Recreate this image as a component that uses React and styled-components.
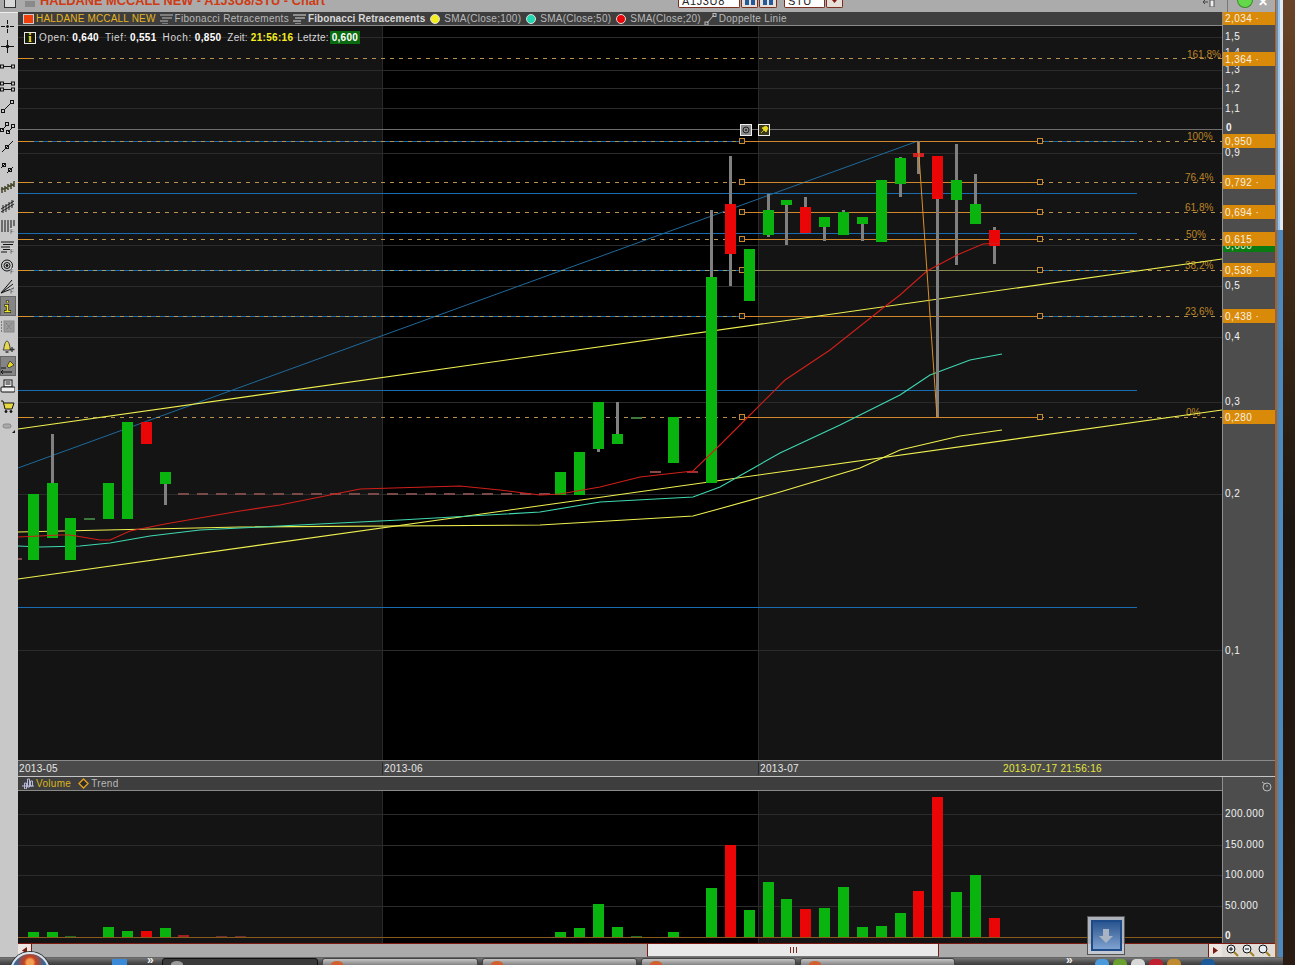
import React from 'react';
import styled, { createGlobalStyle } from 'styled-components';

const GlobalStyle = createGlobalStyle`
  html, body {
    margin: 0;
    padding: 0;
    background: #2a1c12;
  }
`;

const UI_FONT = '"Liberation Sans", Arial, sans-serif';
const AXIS_TOP = 12;
const VOL_AXIS_TOP = 777;

const Screen = styled.div`
  position: relative;
  width: 1295px;
  height: 965px;
  overflow: hidden;
  display: grid;
  grid-template-columns: 1283px 12px;
  grid-template-rows: 957px 8px;
  font-family: ${UI_FONT};
  background: #2a1c12;
`;

const AppWindow = styled.div`
  grid-column: 1;
  grid-row: 1;
  display: flex;
  flex-direction: column;
  min-width: 0;
  box-sizing: border-box;
  padding-right: 8px;
  background:
    linear-gradient(90deg, #aaa 0 1275px, #a8602a 1275px 1276px, #7d8c9c 1276px 1278px, #9cc4e8 1278px 1280px, #dfeaf4 1280px 1283px) top / 100% 230px no-repeat,
    linear-gradient(90deg, #aaa 0 1275px, #a8602a 1275px 1277px, #5b7f9f 1277px 1279px, #4a8ac0 1279px 1283px);
`;

const Wallpaper = styled.div`
  grid-column: 2;
  grid-row: 1 / 3;
  background: linear-gradient(180deg, #6a4428 0%, #4a3018 20%, #1c1510 55%, #2a1c12 100%);
`;

/* title strip */
const TitleBar = styled.header`
  height: 12px;
  flex: none;
  display: flex;
  align-items: flex-end;
  background: #ababab;
  overflow: hidden;
`;

const WindowBox = styled.div`
  width: 10px;
  height: 7px;
  margin: 0 0 4px 4px;
  border: 1px solid #333;
  border-top: 0;
  background: #d8d8d8;
`;

const PinMark = styled.div`
  width: 10px;
  height: 6px;
  margin: 0 0 5px 9px;
  background: #8a8a8a;
`;

const TitleText = styled.span`
  margin-left: 5px;
  margin-bottom: 4px;
  font-size: 12.8px;
  line-height: 14px;
  font-weight: bold;
  color: #cf3a12;
  white-space: nowrap;
`;

const SymbolInput = styled.div`
  width: ${p => p.$w}px;
  height: 8px;
  margin-left: ${p => p.$ml}px;
  margin-bottom: 4px;
  padding-left: 3px;
  box-sizing: border-box;
  background: #fff;
  border: 1px solid #7a3020;
  border-top: 0;
  border-radius: 0 0 2px 2px;
  font-size: 11px;
  line-height: 2px;
  letter-spacing: 0.6px;
  color: #222;
  overflow: hidden;
`;

const SymbolButton = styled.div`
  width: ${p => p.$w || 17}px;
  height: 8px;
  margin-left: 1px;
  margin-bottom: 4px;
  display: flex;
  justify-content: center;
  background: #e8e0d8;
  border: 1px solid #7a3020;
  border-top: 0;
  border-radius: 0 0 2px 2px;
  box-sizing: border-box;
`;

const TitleIcons = styled.div`
  margin-left: auto;
  display: flex;
  align-items: flex-end;
  gap: 5px;
  padding-right: 7px;
`;

const TitleGlyph = styled.svg`
  margin-bottom: 5px;
`;

const TitleSeparator = styled.span`
  width: 1px;
  height: 12px;
  margin-left: 7px;
  background: #777;
`;

const StatusLamp = styled.div`
  width: 16px;
  height: 8px;
  margin-left: 4px;
  margin-bottom: 4px;
  border-radius: 0 0 8px 8px;
  background: #63d94a;
  border: 1px solid #3a8a2a;
  border-top: 0;
  box-sizing: border-box;
`;

const CloseMark = styled.span`
  width: 10px;
  height: 8px;
  margin-bottom: 4px;
  font-size: 12px;
  line-height: 4px;
  overflow: hidden;
  font-weight: bold;
  color: #fff;
`;

const MainRow = styled.div`
  flex: 1;
  display: flex;
  min-height: 0;
`;

/* left drawing tools */
const ToolBar = styled.nav`
  width: 18px;
  flex: none;
  display: flex;
  flex-direction: column;
  padding-top: 3px;
  box-sizing: border-box;
  background: #c8c8c8;
  border-top: 1px solid #eee;
`;

const ToolButton = styled.div`
  width: 16px;
  height: 20px;
  flex: none;
  display: flex;
  align-items: center;
  box-sizing: border-box;
  background: ${p => (p.$active ? '#858585' : 'transparent')};
  box-shadow: ${p => (p.$active ? 'inset 0 0 0 1px #666' : 'none')};
`;

const ChartGrid = styled.div`
  width: 1257px;
  display: grid;
  grid-template-columns: 1204px 53px;
  grid-template-rows: 14px 734px 16px 1px 14px 152px 14px;
`;

const LegendBar = styled.div`
  display: flex;
  align-items: center;
  gap: 2px;
  padding-left: ${p => p.$pl || 5}px;
  box-sizing: border-box;
  background: #3e3e3e;
  border-bottom: 1px solid #8a8a8a;
  font-size: 10px;
  letter-spacing: 0.3px;
  color: #b9b9b9;
  white-space: nowrap;
  overflow: hidden;
`;

const SymbolSwatch = styled.span`
  width: 11px;
  height: 10px;
  background: #f0400c;
  border: 1px solid #ccc;
  box-sizing: border-box;
`;

const LegendName = styled.span`
  color: ${p => p.$color || '#b9b9b9'};
  font-weight: ${p => (p.$bold ? 'bold' : 'normal')};
  letter-spacing: ${p => p.$ls ?? 0.3}px;
`;

const LegendIcon = styled.span`
  display: flex;
  margin-left: ${p => p.$ml ?? 2}px;
`;

const LegendDot = styled.span`
  width: 10px;
  height: 10px;
  border-radius: 50%;
  margin: 0 2px 0 3px;
  background: ${p => p.$color};
  border: 1px solid #ddd;
  box-sizing: border-box;
`;

const PricePanel = styled.div`
  position: relative;
  overflow: hidden;
`;

const PanelSvg = styled.svg`
  display: block;
`;

const QuoteInfo = styled.div`
  position: absolute;
  left: 6px;
  top: 5px;
  display: flex;
  align-items: center;
  gap: 3px;
  font-size: 10px;
  color: #d8d8d8;
  white-space: nowrap;
`;

const InfoBadge = styled.span`
  width: 12px;
  height: 12px;
  box-sizing: border-box;
  display: flex;
  align-items: center;
  justify-content: center;
  background: #1a1a08;
  border: 1px solid #e8e8e8;
  color: #f0e830;
  font-family: "Liberation Serif", serif;
  font-weight: bold;
  font-size: 12px;
  line-height: 10px;
`;

const QuoteLabel = styled.span`
  letter-spacing: ${p => p.$ls ?? 0.62}px;
`;

const QuoteValue = styled.b`
  color: ${p => p.$color || '#fff'};
  margin-left: ${p => p.$ml || 0}px;
  margin-right: ${p => p.$mr ?? 3}px;
  background: ${p => p.$bg || 'transparent'};
  padding: ${p => (p.$bg ? '1px 2px' : '0')};
  letter-spacing: 0.3px;
`;

const FibLabel = styled.text`
  font-family: ${UI_FONT};
  font-size: 10px;
  fill: #bd8426;
`;

/* value axes */
const AxisColumn = styled.div`
  position: relative;
  grid-column: 2;
  grid-row: ${p => p.$row};
  background: #4d4d4d;
  border-left: 1px solid #8f8f8f;
  overflow: hidden;
  box-sizing: border-box;
`;

const AxisTick = styled.span`
  position: absolute;
  left: ${p => p.$left ?? 2}px;
  top: ${p => p.$top}px;
  font-size: 10px;
  line-height: 12px;
  letter-spacing: 0.45px;
  color: #f2f2f2;
  font-weight: ${p => (p.$bold ? 'bold' : 'normal')};
`;

const AxisMarker = styled.span`
  position: absolute;
  left: 0;
  right: 0;
  top: ${p => p.$top}px;
  height: 14px;
  box-sizing: border-box;
  padding: 1px 0 0 2px;
  background: ${p => p.$bg || '#d98a08'};
  font-size: 10px;
  line-height: 14px;
  letter-spacing: 0.45px;
  color: #f6f0e0;
  overflow: hidden;
  white-space: pre;
`;

const LastMarker = styled(AxisMarker)`
  height: 6px;
  padding-top: 0;
  line-height: 0;
  background: #0a7a12;
`;

const CornerIcon = styled.span`
  position: absolute;
  right: 3px;
  top: 2px;
`;

/* time scale */
const TimeAxis = styled.div`
  grid-column: 1 / 3;
  display: grid;
  grid-template-columns: 364px 376px 244px 220px;
  align-items: center;
  background: #4a4a4a;
  border-top: 1px solid #8a8a8a;
  box-sizing: border-box;
  font-size: 10px;
  letter-spacing: 0.32px;
  color: #e8e8e8;
`;

const TimeLabel = styled.span`
  padding-left: 1px;
  border-left: ${p => (p.$first ? 0 : '1px solid #2a2a2a')};
  line-height: 13px;
  color: ${p => p.$color || '#e8e8e8'};
`;

const Divider = styled.div`
  grid-column: 1 / 3;
  background: #c4c4c4;
`;

const VolumePanel = styled.div`
  position: relative;
`;

/* scrollbar row */
const ScrollTrack = styled.div`
  display: flex;
  position: relative;
  align-items: stretch;
  background: #ababab;
  border-top: 1px solid #7a1a10;
  box-sizing: border-box;
`;

const ScrollArrow = styled.div`
  width: 14px;
  flex: none;
  display: flex;
  align-items: center;
  justify-content: center;
  background: #ece6e2;
  border-right: ${p => (p.$left ? '1px solid #7a1a10' : 0)};
  border-left: ${p => (p.$left ? 0 : '1px solid #7a1a10')};
  box-sizing: border-box;
  margin-left: ${p => (p.$left ? 0 : 'auto')};
`;

const ScrollThumb = styled.div`
  width: 292px;
  margin-left: 615px;
  display: flex;
  align-items: center;
  justify-content: center;
  gap: 2px;
  background: #e9e9e9;
  border-left: 1px solid #7a1a10;
  border-right: 1px solid #7a1a10;
  border-bottom: 1px solid #777;
  box-sizing: border-box;
`;

const GripLine = styled.span`
  width: 1px;
  height: 6px;
  background: #7a2a20;
`;

const ZoomGroup = styled.div`
  display: flex;
  align-items: center;
  justify-content: space-around;
  padding: 0 2px;
  background: #e2dcd6;
  border-top: 1px solid #7a1a10;
  box-sizing: border-box;
`;

const DownloadFloat = styled.div`
  position: absolute;
  left: 1087px;
  top: 916px;
  width: 38px;
  height: 39px;
  box-sizing: border-box;
  display: flex;
  align-items: center;
  justify-content: center;
  background: rgba(200, 205, 215, 0.85);
  border: 1px solid #555;
`;

const DownloadInner = styled.div`
  width: 31px;
  height: 31px;
  box-sizing: border-box;
  display: flex;
  align-items: center;
  justify-content: center;
  background: linear-gradient(180deg, #2a5590 0%, #5a7fb0 55%, #7ea2d2 100%);
  border: 2px solid #1d4a88;
`;

/* taskbar */
const Taskbar = styled.footer`
  grid-column: 1;
  grid-row: 2;
  position: relative;
  display: flex;
  align-items: flex-start;
  padding-left: 112px;
  gap: 4px;
  background: linear-gradient(180deg, #767676 0%, #4e4e4e 60%, #3c3c3c 100%);
  border-top: 1px solid #666;
  box-sizing: border-box;
  overflow: hidden;
`;

const StartOrb = styled.div`
  position: absolute;
  left: 10px;
  top: 952px;
  width: 40px;
  height: 40px;
  border-radius: 50%;
  box-sizing: border-box;
  border: 2px solid #d8e4ee;
  background: radial-gradient(circle at 50% 24%, #f0a050 0 10%, #c8401e 18%, #2a6aa0 45%);
  box-shadow: 0 0 0 1px #333;
`;

const QuickIcon = styled.span`
  width: 15px;
  height: 8px;
  margin-top: 1px;
  border-radius: 1px 1px 0 0;
  background: #3a8ad8;
`;

const Chevron = styled.span`
  width: 11px;
  margin-left: ${p => p.$ml}px;
  font-size: 12px;
  line-height: 4px;
  color: #eee;
  height: 8px;
  overflow: hidden;
  font-weight: bold;
`;

const TaskButton = styled.div`
  width: ${p => p.$w}px;
  height: 9px;
  padding: 2px 0 0 8px;
  border-radius: 3px 3px 0 0;
  box-sizing: border-box;
  border: 1px solid ${p => (p.$active ? '#111' : '#444')};
  background: ${p => (p.$active ? '#3a3a3a' : 'linear-gradient(180deg, #c4c4c4, #7a7a7a)')};
`;

const TaskGlyph = styled.span`
  display: block;
  width: 12px;
  height: 6px;
  border-radius: 50% 50% 0 0;
  background: ${p => p.$color};
`;

const TrayGroup = styled.div`
  margin-left: auto;
  display: flex;
  gap: 4px;
  padding: 1px 68px 0 0;
`;

const TrayIcon = styled.span`
  width: 14px;
  height: 8px;
  margin-left: ${p => p.$ml || 0}px;
  border-radius: 5px 5px 0 0;
  background: ${p => p.$color};
`;

const GREEN = '#0ab40e';
const RED = '#ea0606';
const WICK = '#808080';

// x left edge, body top/bottom, wick top/bottom, colour
const candles = [
  { x: 28, t: 494, b: 560, c: GREEN },
  { x: 47, t: 483, b: 538, wt: 434, wb: 483, c: GREEN },
  { x: 65, t: 518, b: 560, c: GREEN },
  { x: 84, t: 518, b: 520, c: '#3c7a3c' },
  { x: 103, t: 483, b: 519, c: GREEN },
  { x: 122, t: 422, b: 519, c: GREEN },
  { x: 141, t: 422, b: 444, c: RED },
  { x: 160, t: 472, b: 484, wt: 484, wb: 505, c: GREEN },
  { x: 555, t: 472, b: 495, c: GREEN },
  { x: 574, t: 452, b: 495, c: GREEN },
  { x: 593, t: 402, b: 449, wt: 449, wb: 452, c: GREEN },
  { x: 612, t: 434, b: 444, wt: 402, wb: 434, c: GREEN },
  { x: 631, t: 417, b: 419, c: '#3c7a3c' },
  { x: 650, t: 471, b: 473, c: '#8a4a44' },
  { x: 668, t: 417, b: 463, c: GREEN },
  { x: 687, t: 471, b: 473, c: '#a03030' },
  { x: 706, t: 277, b: 483, wt: 210, wb: 277, c: GREEN },
  { x: 725, t: 204, b: 254, wt: 156, wb: 286, c: RED },
  { x: 744, t: 249, b: 301, c: GREEN },
  { x: 763, t: 210, b: 235, wt: 194, wb: 237, c: GREEN },
  { x: 781, t: 200, b: 205, wt: 205, wb: 245, c: GREEN },
  { x: 800, t: 207, b: 233, wt: 197, wb: 233, c: RED },
  { x: 819, t: 217, b: 227, wt: 227, wb: 241, c: GREEN },
  { x: 838, t: 212, b: 235, wt: 210, wb: 212, c: GREEN },
  { x: 857, t: 217, b: 224, wt: 224, wb: 241, c: GREEN },
  { x: 876, t: 180, b: 242, c: GREEN },
  { x: 895, t: 158, b: 184, wt: 157, wb: 197, c: GREEN },
  { x: 913, t: 153, b: 157, wt: 141, wb: 174, c: '#d02020' },
  { x: 932, t: 156, b: 199, wt: 199, wb: 417, c: RED },
  { x: 951, t: 180, b: 200, wt: 144, wb: 265, c: GREEN },
  { x: 970, t: 204, b: 224, wt: 174, wb: 204, c: GREEN },
  { x: 989, t: 230, b: 246, wt: 227, wb: 264, c: RED },
];

const volumes = [
  [28, 932, GREEN], [47, 932, GREEN], [65, 936, '#1d6a20'], [103, 927, GREEN], [122, 931, GREEN],
  [141, 931, RED], [160, 928, GREEN], [178, 935, '#a02020'], [216, 936, '#6a3030'], [235, 936, '#6a3030'],
  [555, 932, GREEN], [574, 928, GREEN], [593, 904, GREEN], [612, 927, GREEN], [631, 936, '#1d6a20'],
  [668, 932, GREEN], [706, 888, GREEN], [725, 845, RED], [744, 910, GREEN], [763, 882, GREEN],
  [781, 899, GREEN], [800, 909, RED], [819, 908, GREEN], [838, 887, GREEN], [857, 927, GREEN],
  [876, 926, GREEN], [895, 913, GREEN], [913, 891, RED], [932, 797, RED], [951, 892, GREEN],
  [970, 875, GREEN], [989, 918, RED],
];

const fibLevels = [
  { y: 141, label: '100%', ly: 140, lx: 1187 },
  { y: 182, label: '76,4%', ly: 181, lx: 1185 },
  { y: 212, label: '61,8%', ly: 211, lx: 1185 },
  { y: 239, label: '50%', ly: 238, lx: 1186 },
  { y: 270, label: '38,2%', ly: 269, lx: 1185, solid: '#8c8c50' },
  { y: 316, label: '23,6%', ly: 315, lx: 1185 },
  { y: 417, label: '0%', ly: 416, lx: 1186 },
];

const channelLines = [141, 193, 233, 270, 316, 390, 607];
const priceGrid = [37, 70, 88, 108, 153, 245, 286, 337, 402, 494, 650];
const volumeGrid = [814, 845, 875, 906];

const sma100 = '18,532 240,527 540,525 693,516 715,510 780,492 860,468 900,450 960,436 1002,430';
const sma50 = '18,546 40,547 80,546 110,543 150,536 200,530 240,528 400,520 540,512 600,502 693,497 720,487 780,453 840,425 900,395 930,375 970,360 1002,354';
const sma20 = '18,537 60,535 70,535 100,540 110,540 130,531 165,524 240,511 280,505 360,489 460,486 500,490 540,495 560,494 600,487 640,477 693,471 720,445 750,415 785,380 830,350 883,308 900,295 927,271 957,255 983,244 1000,243';

const PriceChart = () => (
  <PanelSvg width="1204" height="734" viewBox="18 26 1204 734">
    <rect x="18" y="26" width="364" height="734" fill="#141414" />
    <rect x="382" y="26" width="376" height="734" fill="#000" />
    <rect x="758" y="26" width="464" height="734" fill="#141414" />
    <path d="M382.5 26V760M758.5 26V760" stroke="#2a2a2a" />
    {priceGrid.map(y => (
      <line key={y} x1="18" x2="1222" y1={y + 0.5} y2={y + 0.5} stroke="#2b2b2b" />
    ))}
    {channelLines.map(y => (
      <line key={y} x1="18" x2="1137" y1={y + 0.5} y2={y + 0.5} stroke="#1a6cb0" />
    ))}
    <line x1="18" x2="1222" y1="129.5" y2="129.5" stroke="#6e6e6e" />
    <line x1="18" y1="468" x2="918" y2="141" stroke="#1e6a9c" />

    {/* fibonacci retracement */}
    <line x1="18" x2="30" y1="58.5" y2="58.5" stroke="#d98f2a" />
    <line x1="30" x2="1222" y1="58.5" y2="58.5" stroke="#b8934f" strokeDasharray="4 5" />
    <FibLabel x="1187" y="58">161,8%</FibLabel>
    {fibLevels.map(f => (
      <g key={f.y}>
        <line x1="18" x2="30" y1={f.y + 0.5} y2={f.y + 0.5} stroke="#d98f2a" />
        <line x1="30" x2="742" y1={f.y + 0.5} y2={f.y + 0.5} stroke={f.solid ? '#a0a070' : '#b8934f'} strokeDasharray="4 5" />
        <line x1="742" x2="1040" y1={f.y + 0.5} y2={f.y + 0.5} stroke={f.solid || '#d0862a'} />
        <line x1="1040" x2="1222" y1={f.y + 0.5} y2={f.y + 0.5} stroke="#b8934f" strokeDasharray="4 5" />
        <rect x="739.5" y={f.y - 2.5} width="5" height="5" fill="#111" stroke="#c88a30" />
        <rect x="1037.5" y={f.y - 2.5} width="5" height="5" fill="#111" stroke="#c88a30" />
        <FibLabel x={f.lx} y={f.ly}>{f.label}</FibLabel>
      </g>
    ))}

    <line x1="18" y1="429" x2="1222" y2="259" stroke="#f0f050" strokeWidth="1.1" />
    <line x1="18" y1="579" x2="1222" y2="410" stroke="#f0f050" strokeWidth="1.1" />
    <polyline points={sma100} fill="none" stroke="#f0f050" strokeWidth="1.1" />
    <polyline points={sma50} fill="none" stroke="#3fd8b0" strokeWidth="1.1" />
    <line x1="178" x2="555" y1="494" y2="494" stroke="#7a4a48" strokeWidth="2" strokeDasharray="11 8" />
    <line x1="18" x2="22" y1="559" y2="559" stroke="#7a4a48" strokeWidth="2" />

    {candles.map(c => (
      <g key={c.x}>
        {c.wt !== undefined && <rect x={c.x + 4} y={c.wt} width="3" height={c.wb - c.wt} fill={WICK} />}
        <rect x={c.x} y={c.t} width="11" height={c.b - c.t} fill={c.c} />
      </g>
    ))}

    <polyline points={sma20} fill="none" stroke="#d01f1a" strokeWidth="1.1" />
    <line x1="918" y1="141" x2="937" y2="417" stroke="#d98f2a" />

    {/* handles of the selected trend line */}
    <rect x="740.5" y="124.5" width="11" height="11" fill="#8a8a8a" stroke="#eee" />
    <circle cx="746" cy="130" r="3" fill="none" stroke="#222" />
    <circle cx="746" cy="130" r="1" fill="#222" />
    <rect x="758.5" y="124.5" width="11" height="11" fill="#3a3a1a" stroke="#eee" />
    <path d="M761 133l3-3M762 128l4 4 2-4-2-2z" fill="#e8d820" stroke="#e8d820" strokeWidth="0.8" />
  </PanelSvg>
);

const VolumeChart = () => (
  <PanelSvg width="1204" height="152" viewBox="18 791 1204 152">
    <rect x="18" y="791" width="364" height="152" fill="#141414" />
    <rect x="382" y="791" width="376" height="152" fill="#000" />
    <rect x="758" y="791" width="464" height="152" fill="#141414" />
    <path d="M382.5 791V943M758.5 791V943" stroke="#2a2a2a" />
    {volumeGrid.map(y => (
      <line key={y} x1="18" x2="1222" y1={y + 0.5} y2={y + 0.5} stroke="#2b2b2b" />
    ))}
    {volumes.map(([x, top, color]) => (
      <rect key={x} x={x} y={top} width="11" height={937 - top} fill={color} />
    ))}
    <line x1="18" x2="1222" y1="937.5" y2="937.5" stroke="#8a5a1a" />
  </PanelSvg>
);

const Ico = ({ children, w = 15, h = 15 }) => (
  <svg width={w} height={h} viewBox={`0 0 ${w} ${h}`} fill="none" stroke="#111" strokeWidth="1">
    {children}
  </svg>
);

const Dot = ({ x, y }) => <rect x={x - 1.5} y={y - 1.5} width="3" height="3" fill="none" stroke="#111" />;
const FMark = () => <text x="10" y="14.5" fontSize="7" fontWeight="bold" fontFamily={UI_FONT} fill="#111" stroke="#fff" strokeWidth="0.3">F</text>;

const tools = [
  <Ico key="a"><path d="M7.5 1v4M7.5 10v4M1 7.5h4M10 7.5h4" /><circle cx="7.5" cy="7.5" r="1" fill="#111" /></Ico>,
  <Ico key="b"><path d="M7.5 1v13M1 7.5h13" /><circle cx="7.5" cy="7.5" r="1.3" fill="#111" /></Ico>,
  <Ico key="c"><path d="M3 7.5h9" /><Dot x={2} y={7.5} /><Dot x={13} y={7.5} /></Ico>,
  <Ico key="d"><path d="M3 4.5h9M3 10.5h9" /><Dot x={2} y={4.5} /><Dot x={13} y={4.5} /><Dot x={2} y={10.5} /><Dot x={13} y={10.5} /></Ico>,
  <Ico key="e"><path d="M4 11l7-7" /><Dot x={3} y={12} /><Dot x={12} y={3} /></Ico>,
  <Ico key="f"><path d="M2 11l5-5M8 13l5-5" /><Dot x={2} y={11} /><Dot x={7} y={5} /><Dot x={8} y={13} /><Dot x={13} y={7} /></Ico>,
  <Ico key="g"><path d="M2 13L13 2" /><Dot x={7} y={8} /></Ico>,
  <Ico key="h"><path d="M1 9l5-5M7 14l6-6" /><Dot x={4} y={6} /><Dot x={10} y={11} /></Ico>,
  <Ico key="i"><path d="M2 14V8M5 13V7M8 11V5M11 10V4M14 8V2M1 11l13-6" stroke="#4a4a30" strokeWidth="1.6" /></Ico>,
  <Ico key="j"><path d="M1 13L14 5M1 10L14 2M3 14V6M6 13V5M9 11V3M12 9V1" stroke="#222" /></Ico>,
  <Ico key="k"><path d="M2 1v12M5 1v12M8 1v12M11 1v8M14 1v6" /><FMark /></Ico>,
  <Ico key="l"><path d="M1 3h13M3 5.5h10M1 8h9M3 10.5h7M1 13h6" /><FMark /></Ico>,
  <Ico key="m"><circle cx="7" cy="6.5" r="5.5" /><circle cx="7" cy="6.5" r="3" /><circle cx="7" cy="6.5" r="1" fill="#111" /><FMark /></Ico>,
  <Ico key="n"><path d="M1 14L12 1M1 14L13 5M1 14L14 9" /><FMark /></Ico>,
  <Ico key="o"><path d="M7.5 1.5v2M4.500 6.500h3v5M4 12.500h7" stroke="#222" strokeWidth="3.200" /><path d="M7.5 2v1.500M5 6.500h2.500v5.500M4.500 12.500h6" stroke="#f0e820" strokeWidth="1.600" /></Ico>,
  <Ico key="p"><rect x="4" y="2" width="10" height="11" fill="#9a9a9a" stroke="#888" /><path d="M1.5 2v11M6 4l6 7M12 4l-6 7" stroke="#7a7a7a" strokeDasharray="2 1" /></Ico>,
  <Ico key="q"><path d="M3 11c1-1 1-3 1.5-5S6 2 7 2s2 2 2.5 4 .5 4 1.500 5z" fill="#e8d850" stroke="#444" /><path d="M5.500 13h3M12 8v5M9.500 10.500h5" stroke="#333" strokeWidth="1.300" /></Ico>,
  <Ico key="r"><path d="M1 13h11M1 13l2-2M1 13l2 2" stroke="#111" /><path d="M1 9h5" stroke="#111" /><path d="M7 7l3-5 4 4-5 3z" fill="#e8d820" stroke="#444" /></Ico>,
  <Ico key="s"><rect x="4" y="1" width="8" height="7" fill="#f4f4f4" /><rect x="1" y="8" width="14" height="5" rx="1" fill="#eee" /><path d="M5.500 3h5M5.500 5h5" /></Ico>,
  <Ico key="t"><path d="M1 2h2l2 8h7l2-6H4" fill="#e8d840" stroke="#111" /><circle cx="6" cy="12.5" r="1" fill="#111" /><circle cx="11" cy="12.5" r="1" fill="#111" /></Ico>,
  <Ico key="u"><rect x="3" y="5" width="8" height="4" rx="2" fill="#aaa" stroke="#888" /><path d="M15 11v3h-3z" fill="#111" stroke="none" /></Ico>,
];

const Magnifier = ({ sign }) => (
  <svg width="13" height="13" viewBox="0 0 13 13" fill="none" stroke="#111">
    <circle cx="5" cy="5" r="4" fill="#e8eef4" />
    {sign && <path d="M3 5h4" />}
    {sign === '+' && <path d="M5 3v4" />}
    <path d="M8 8l4 4" stroke="#a08020" strokeWidth="2" />
  </svg>
);

const priceTicks = [
  ['1,5', 31], ['1,4', 47], ['1,3', 64], ['1,2', 83], ['1,1', 103], ['0,9', 147], ['0,5', 280], ['0,4', 331], ['0,3', 396], ['0,2', 488], ['0,1', 645],
];

const priceMarkers = [
  ['2,034 ·', 11], ['1,364 ·', 52], ['0,950', 134], ['0,792 ·', 175], ['0,694 ·', 205], ['0,536 ·', 263], ['0,438 ·', 309], ['0,280', 410],
];

const volumeTicks = [
  ['200.000', 808], ['150.000', 839], ['100.000', 869], ['50.000', 900],
];

const App = () => (
  <>
    <GlobalStyle />
    <Screen>
      <AppWindow>
        <TitleBar>
          <WindowBox />
          <PinMark />
          <TitleText>HALDANE MCCALL NEW - A1J3U8/STU - Chart</TitleText>
          <SymbolInput $w={62} $ml={353}>A1J3U8</SymbolInput>
          <SymbolButton><svg width="12" height="6" viewBox="0 0 12 6"><path d="M1 0h4v5H1zM7 0h4v5H7z" fill="#245a9a" /></svg></SymbolButton>
          <SymbolButton $w={18}><svg width="12" height="6" viewBox="0 0 12 6"><path d="M1 0h4v5H1zM7 0h4v5H7z" fill="#245a9a" /></svg></SymbolButton>
          <SymbolInput $w={41} $ml={7}>STU</SymbolInput>
          <SymbolButton><svg width="5" height="3" viewBox="0 0 5 3"><path d="M0 0h5L2.500 3z" fill="#7a1a10" /></svg></SymbolButton>
          <TitleIcons>
            <TitleGlyph width="12" height="7" viewBox="0 0 12 7">
              <path d="M7 0h4v7H7z" fill="#eee" stroke="#555" />
              <path d="M0 2h5M2 0L0 2l2 2" fill="none" stroke="#444" />
            </TitleGlyph>
            <TitleSeparator />
            <StatusLamp />
            <CloseMark>✕</CloseMark>
          </TitleIcons>
        </TitleBar>
        <MainRow>
          <ToolBar>
            {tools.map((icon, i) => (
              <ToolButton key={i} $active={i === 14 || i === 17}>{icon}</ToolButton>
            ))}
          </ToolBar>
          <ChartGrid>
            <LegendBar>
              <SymbolSwatch />
              <LegendName $color="#e6b422" $ls={0.18}>HALDANE MCCALL NEW</LegendName>
              <LegendIcon><Ico w={13} h={11}><path d="M0 2h13M2 5h10M0 8h8M2 11h6" stroke="#bbb" /></Ico></LegendIcon>
              <LegendName>Fibonacci Retracements</LegendName>
              <LegendIcon><Ico w={13} h={11}><path d="M0 2h13M2 5h10M0 8h8M2 11h6" stroke="#ddd" /></Ico></LegendIcon>
              <LegendName $bold $color="#d8d8d8" $ls={0.08}>Fibonacci Retracements</LegendName>
              <LegendDot $color="#f4ee20" />
              <LegendName $ls={0.25}>SMA(Close;100)</LegendName>
              <LegendDot $color="#22d8b0" />
              <LegendName $ls={0.25}>SMA(Close;50)</LegendName>
              <LegendDot $color="#ea0606" />
              <LegendName $ls={0.2}>SMA(Close;20)</LegendName>
              <LegendIcon $ml={1}>
                <Ico w={13} h={12}>
                  <path d="M3 10l7-8" stroke="#bbb" />
                  <rect x="1" y="9" width="3" height="3" stroke="#bbb" />
                  <rect x="9" y="0.500" width="3" height="3" stroke="#bbb" />
                </Ico>
              </LegendIcon>
              <LegendName>Doppelte Linie</LegendName>
            </LegendBar>
            <AxisColumn $row="1 / 3">
              {priceTicks.map(([label, top]) => (
                <AxisTick key={label} $top={top - AXIS_TOP}>{label}</AxisTick>
              ))}
              <AxisTick $bold $left={3} $top={122 - AXIS_TOP}>0</AxisTick>
              {priceMarkers.map(([label, top]) => (
                <AxisMarker key={label} $top={top - AXIS_TOP}>{label}</AxisMarker>
              ))}
              <LastMarker $top={246 - AXIS_TOP}>0,600</LastMarker>
              <AxisMarker $top={232 - AXIS_TOP}>0,615</AxisMarker>
            </AxisColumn>
            <PricePanel>
              <PriceChart />
              <QuoteInfo>
                <InfoBadge>i</InfoBadge>
                <QuoteLabel>Open:</QuoteLabel>
                <QuoteValue>0,640</QuoteValue>
                <QuoteLabel>Tief:</QuoteLabel>
                <QuoteValue>0,551</QuoteValue>
                <QuoteLabel>Hoch:</QuoteLabel>
                <QuoteValue>0,850</QuoteValue>
                <QuoteLabel $ls={0.2}>Zeit:</QuoteLabel>
                <QuoteValue $color="#f4ee20" $mr={1}>21:56:16</QuoteValue>
                <QuoteLabel $ls={0.2}>Letzte:</QuoteLabel>
                <QuoteValue $bg="#0a6a10" $ml={-2}>0,600</QuoteValue>
              </QuoteInfo>
            </PricePanel>
            <TimeAxis>
              <TimeLabel $first>2013-05</TimeLabel>
              <TimeLabel>2013-06</TimeLabel>
              <TimeLabel>2013-07</TimeLabel>
              <TimeLabel $first $color="#e6e640">2013-07-17 21:56:16</TimeLabel>
            </TimeAxis>
            <Divider />
            <LegendBar $pl={4}>
              <LegendIcon $ml={0}>
                <Ico w={12} h={11}><path d="M0 8h12M2.500 5h2v6h-2zM5.500 1h2v8h-2zM8.500 3h2v5h-2z" stroke="#b8b8d8" /></Ico>
              </LegendIcon>
              <LegendName $color="#d8b420">Volume</LegendName>
              <LegendIcon $ml={5}>
                <svg width="11" height="11" viewBox="0 0 11 11"><path d="M5.5 1L10 5.500 5.500 10 1 5.500z" fill="#2a2a2a" stroke="#e0a020" strokeWidth="1.400" /></svg>
              </LegendIcon>
              <LegendName $ls={0.35}>Trend</LegendName>
            </LegendBar>
            <AxisColumn $row="5 / 7">
              <CornerIcon>
                <svg width="11" height="13" viewBox="0 0 11 13" fill="none" stroke="#bbb"><circle cx="6" cy="7" r="4" /><path d="M1 2l3 2M6 5v2" /></svg>
              </CornerIcon>
              {volumeTicks.map(([label, top]) => (
                <AxisTick key={label} $top={top - VOL_AXIS_TOP}>{label}</AxisTick>
              ))}
              <AxisTick $bold $top={930 - VOL_AXIS_TOP}>0</AxisTick>
            </AxisColumn>
            <VolumePanel>
              <VolumeChart />
            </VolumePanel>
            <ScrollTrack>
              <ScrollArrow $left>
                <svg width="5" height="7" viewBox="0 0 5 7"><path d="M5 0v7L0 3.500z" fill="#7a1a10" /></svg>
              </ScrollArrow>
              <ScrollThumb>
                <GripLine />
                <GripLine />
                <GripLine />
              </ScrollThumb>
              <ScrollArrow>
                <svg width="5" height="7" viewBox="0 0 5 7"><path d="M0 0v7l5-3.500z" fill="#7a1a10" /></svg>
              </ScrollArrow>
            </ScrollTrack>
            <ZoomGroup>
              <Magnifier sign="+" />
              <Magnifier sign="-" />
              <Magnifier />
            </ZoomGroup>
          </ChartGrid>
        </MainRow>
      </AppWindow>
      <Wallpaper />
      <Taskbar>
        <QuickIcon />
        <Chevron $ml={16}>»</Chevron>
        <TaskButton $active $w={156}><TaskGlyph $color="#9a9a9a" /></TaskButton>
        <TaskButton $w={156}><TaskGlyph $color="#d06030" /></TaskButton>
        <TaskButton $w={155}><TaskGlyph $color="#d06030" /></TaskButton>
        <TaskButton $w={155}><TaskGlyph $color="#d06030" /></TaskButton>
        <TaskButton $w={155}><TaskGlyph $color="#d06030" /></TaskButton>
        <Chevron $ml={107}>»</Chevron>
        <TrayGroup>
          <TrayIcon $color="#4a9adc" />
          <TrayIcon $color="#6aa030" />
          <TrayIcon $color="#d8d8d8" />
          <TrayIcon $color="#c02030" />
          <TrayIcon $color="#c08a30" />
          <TrayIcon $color="#1d5a9a" $ml={16} />
        </TrayGroup>
      </Taskbar>
      <StartOrb />
      <DownloadFloat>
        <DownloadInner>
          <svg width="16" height="16" viewBox="0 0 16 16"><path d="M5 1h6v7h4l-7 7-7-7h4z" fill="#a8b4c4" /></svg>
        </DownloadInner>
      </DownloadFloat>
    </Screen>
  </>
);

export default App;
